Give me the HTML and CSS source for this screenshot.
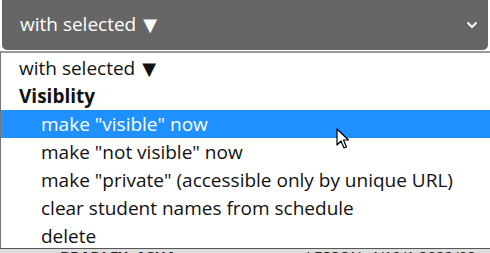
FILE: index.html
```html
<!DOCTYPE html>
<html lang="en">
<head>
    <meta charset="UTF-8">
    <title>With selected</title>
    <link rel="stylesheet" href="styles.css">
</head>
<body>
    <div class="select">
        <span class="select-label">with selected <span class="tri">&#9660;</span></span>
        <svg class="chevron" width="12" height="8" viewBox="0 0 12 8">
            <path d="M1.5 1.5 L6 6 L10.5 1.5" fill="none" stroke="#fff" stroke-width="2"/>
        </svg>
    </div>
    <ul class="listbox">
        <li class="option">with selected <span class="tri">&#9660;</span></li>
        <li class="group">Visiblity</li>
        <li class="option indent active">make "visible" now</li>
        <li class="option indent">make "not visible" now</li>
        <li class="option indent">make "private" (accessible only by unique URL)</li>
        <li class="option indent">clear student names from schedule</li>
        <li class="option indent">delete</li>
    </ul>
    <div class="below"><span class="below-text">BRADLEY, ASHA</span><span class="below-text right">LESSON, 4/10/1 2022/02</span></div>
    <svg class="cursor" width="14" height="22" viewBox="0 0 14 22">
        <path d="M1 1 L1 17 L5 13 L8 20 L10.5 19 L7.5 12 L12.5 12 Z" fill="#fff" stroke="#000" stroke-width="1.2" stroke-linejoin="round"/>
    </svg>
</body>
</html>
```

FILE: styles.css
```css
* {
    box-sizing: border-box;
    margin: 0;
    padding: 0;
}

body {
    font-family: "Open Sans", "Noto Sans", sans-serif;
    background: #fff;
    width: 490px;
    height: 253px;
    overflow: hidden;
    position: relative;
}

/* Closed select */
.select {
    margin: 0 2px;
    height: 50px;
    background: #666;
    border-radius: 0 0 5px 5px;
    display: flex;
    align-items: center;
    justify-content: space-between;
    padding: 0 10px 2px 18px;
    color: #fff;
    font-size: 19px;
}

.chevron {
    margin-top: 2px;
}

.tri {
    font-family: "DejaVu Sans", sans-serif;
    font-size: 18px;
    margin-left: 2px;
}

/* Opened list */
.listbox {
    list-style: none;
    margin-top: 1px;
    height: 197px;
    border-top: 2px solid #9a9a9a;
    border-left: 1px solid #777;
    padding-top: 1px;
    font-size: 19px;
    color: #111;
}

.option,
.group {
    height: 28px;
    line-height: 28px;
    padding-left: 18px;
    white-space: nowrap;
}

.group {
    font-weight: bold;
}

.indent {
    padding-left: 40px;
}

.active {
    background: #1e90ff;
    color: #fff;
}

/* Page content peeking below the list */
.below {
    height: 5px;
    border-top: 1px solid #555;
    background: #ddd;
    overflow: hidden;
    display: flex;
    font-size: 15px;
    font-weight: bold;
    line-height: 14px;
    color: #222;
}

.below-text {
    margin-left: 60px;
}

.below-text.right {
    margin-left: 130px;
    font-weight: normal;
}

.cursor {
    position: absolute;
    left: 336px;
    top: 128px;
}
```
